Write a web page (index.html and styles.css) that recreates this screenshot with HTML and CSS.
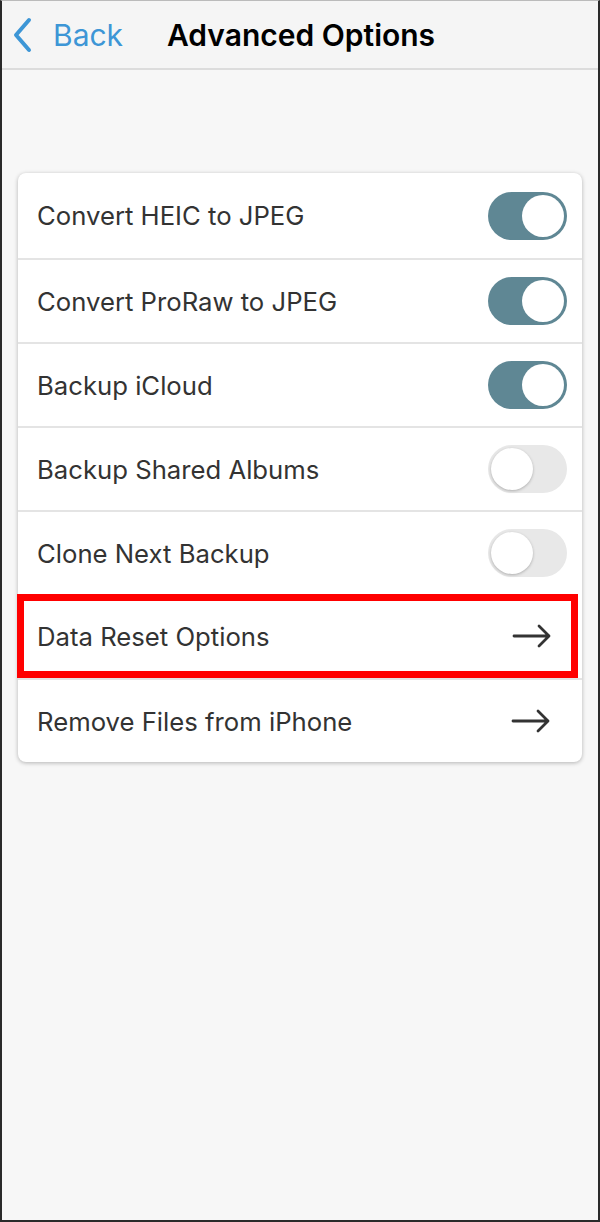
FILE: index.html
```html
<!DOCTYPE html>
<html>
<head>
<meta charset="utf-8">
<link rel="stylesheet" href="styles.css">
</head>
<body>
<div class="screen">
  <header class="nav">
    <a class="back">
      <svg class="chev" width="20" height="36" viewBox="0 0 20 36"><path d="M16 3 L3 18 L16 33" fill="none" stroke="#3d96d6" stroke-width="4" stroke-linecap="round" stroke-linejoin="round"/></svg>
      <span>Back</span>
    </a>
    <h1 class="title">Advanced Options</h1>
  </header>
  <main class="content">
    <div class="card">
      <div class="row"><span class="label">Convert HEIC to JPEG</span><span class="toggle on"><span class="knob"></span></span></div>
      <div class="row"><span class="label">Convert ProRaw to JPEG</span><span class="toggle on"><span class="knob"></span></span></div>
      <div class="row"><span class="label">Backup iCloud</span><span class="toggle on"><span class="knob"></span></span></div>
      <div class="row"><span class="label">Backup Shared Albums</span><span class="toggle"><span class="knob"></span></span></div>
      <div class="row"><span class="label">Clone Next Backup</span><span class="toggle"><span class="knob"></span></span></div>
      <div class="row highlight"><span class="label">Data Reset Options</span>
        <svg class="arrow" width="40" height="26" viewBox="0 0 40 26"><path d="M2 13 H37 M27 3 L37 13 L27 23" fill="none" stroke="#333" stroke-width="2.8" stroke-linecap="round" stroke-linejoin="round"/></svg>
      </div>
      <div class="row"><span class="label">Remove Files from iPhone</span>
        <svg class="arrow" width="40" height="26" viewBox="0 0 40 26"><path d="M2 13 H37 M27 3 L37 13 L27 23" fill="none" stroke="#333" stroke-width="2.8" stroke-linecap="round" stroke-linejoin="round"/></svg>
      </div>
    </div>
  </main>
</div>
</body>
</html>
```
FILE: styles.css
```css
* { box-sizing: border-box; }
html, body { margin: 0; padding: 0; }
body { font-family: Inter, "Liberation Sans", Arial, sans-serif; background: #f7f7f7; }
.screen {
  width: 600px;
  height: 1222px;
  border-left: 2px solid #2a2a2a;
  border-right: 2px solid #2a2a2a;
  border-bottom: 2px solid #2a2a2a;
  border-top: 1px solid #bbb;
  background: #f7f7f7;
  display: flex;
  flex-direction: column;
}
.nav {
  height: 69px;
  flex: none;
  background: #f5f5f5;
  border-bottom: 2px solid #dcdcdc;
  display: flex;
  align-items: center;
  padding-left: 11px;
}
.back {
  display: flex;
  align-items: center;
  color: #3d96d6;
  font-size: 30px;
  width: 154px;
}
.chev { margin-right: 20px; }
.title {
  margin: 0;
  font-size: 30px;
  font-weight: 600;
  color: #000;
}
.content { padding: 103px 16px 0 16px; }
.card {
  background: #fff;
  border-radius: 8px;
  box-shadow: 0 1px 4px rgba(0,0,0,0.28);
}
.row {
  height: 84px;
  display: flex;
  align-items: center;
  justify-content: space-between;
  padding: 0 15px 0 19px;
  border-top: 2px solid #e4e4e4;
}
.row:first-child { border-top: none; height: 85px; }
.label { font-size: 25.7px; color: #333; }
.toggle {
  width: 79px;
  height: 48px;
  border-radius: 24px;
  background: #e8e8e8;
  position: relative;
  flex: none;
}
.toggle.on { background: #5f8794; }
.knob {
  position: absolute;
  top: 3px;
  left: 3px;
  width: 42px;
  height: 42px;
  border-radius: 50%;
  background: #fff;
  box-shadow: 0 1px 3px rgba(0,0,0,0.25);
}
.toggle.on .knob { left: 34px; box-shadow: none; }
.arrow { margin-right: 16px; }
.highlight {
  outline: 7px solid #ff0000;
  outline-offset: -7px;
  margin: 0 4px 0 -1px;
  padding-left: 20px;
  padding-right: 10px;
  border-top: none;
  height: 84px;
  position: relative;
}
```
